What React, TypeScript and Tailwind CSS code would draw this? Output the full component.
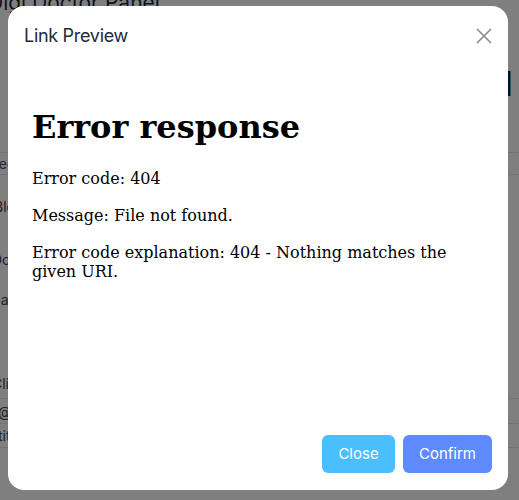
import React from "react";

function Background() {
  return (
    <div className="relative h-[500px] w-full overflow-hidden bg-white font-['Inter',sans-serif] text-[#1f2937]">
      <div className="-mt-[9px] -ml-[12px] text-[21px] leading-[24px]">Digi Doctor Panel</div>
      <div className="mt-[49px] flex justify-end pr-[6px] text-[34px] font-normal leading-[40px] text-[#111827]">All</div>
      <div className="mt-[48px] border-t border-[#e5e7eb]">
        <div className="flex h-[22px] items-center border-b border-[#e5e7eb] text-[14px] text-[#4b5563]">
          <span className="-ml-[10px]">Record</span>
        </div>
        <div className="flex h-[62px] items-center text-[14px] text-[#374151]">
          <span className="-ml-[6px]">Blog</span>
        </div>
        <div className="flex h-[44px] items-center text-[14px] text-[#374151]">
          <span className="-ml-[8px]">Doc</span>
        </div>
        <div className="flex h-[70px] items-start pt-[8px] text-[14px] text-[#374151]">
          <span className="-ml-[12px]">Manage</span>
        </div>
        <div className="flex h-[48px] items-end border-b border-[#e5e7eb] pb-[4px] text-[14px] text-[#374151]">
          <span className="-ml-[8px]">Clinic</span>
        </div>
        <div className="flex h-[25px] items-center border-b border-[#e5e7eb] text-[14px] text-[#374151]">
          <span className="-ml-[2px]">@mail</span>
        </div>
        <div className="flex h-[24px] items-center border-b border-[#e5e7eb] text-[14px] text-[#374151]">
          <span className="-ml-[2px]">title</span>
        </div>
      </div>
    </div>
  );
}

export default function App() {
  return (
    <div className="relative h-[500px] w-[519px] overflow-hidden">
      <Background />
      {/* overlay + modal */}
      <div className="absolute inset-0 bg-black/50 pl-[8px] pt-[6px]">
        <div className="flex h-[484px] w-[500px] flex-col rounded-[16px] bg-white">
          <div className="flex items-center justify-between pl-[16px] pr-[16px] pt-[18px]">
            <span className="font-['Inter',sans-serif] text-[18px] leading-[24px] tracking-[-0.3px] text-[#1e2b3a]">
              Link Preview
            </span>
            <button className="flex h-[16px] w-[16px] items-center justify-center text-[#8a8a8a]">
              <svg width="16" height="16" viewBox="0 0 16 16" fill="none" stroke="currentColor" strokeWidth="1.6">
                <path d="M1 1L15 15M15 1L1 15" />
              </svg>
            </button>
          </div>

          {/* preview frame */}
          <div className="mt-[40px] flex-1 px-[16px]">
            <div className="px-[8px] pt-[21px] font-['DejaVu_Serif',serif] text-black">
              <h1 className="text-[32px] font-bold leading-[37px]">Error response</h1>
              <p className="mt-[24px] text-[16px] leading-[18.6px]">Error code: 404</p>
              <p className="mt-[18px] text-[16px] leading-[18.6px]">Message: File not found.</p>
              <p className="mt-[19px] w-[452px] text-[16px] leading-[18.6px]">
                Error code explanation: 404 - Nothing matches the given URI.
              </p>
            </div>
          </div>

          <div className="flex justify-end gap-[8px] pb-[17px] pr-[16px] font-['Inter',sans-serif]">
            <button className="h-[38px] w-[73px] rounded-[6px] bg-[#4bbffd] text-[15px] text-white">Close</button>
            <button className="h-[38px] w-[89px] rounded-[6px] bg-[#5d8bff] text-[15px] text-white">Confirm</button>
          </div>
        </div>
      </div>
    </div>
  );
}
